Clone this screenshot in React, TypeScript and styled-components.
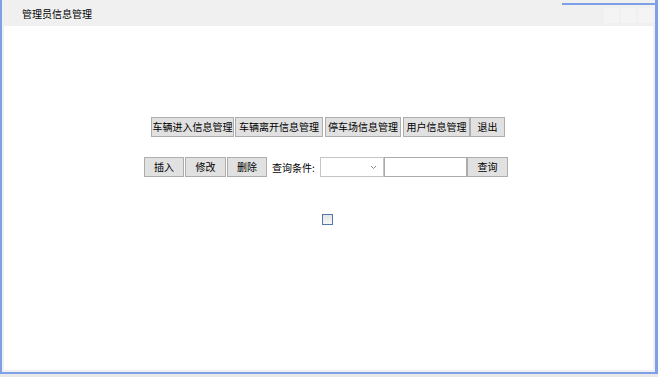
import React from 'react';
import styled, { createGlobalStyle } from 'styled-components';

const GlobalStyle = createGlobalStyle`
  html, body {
    margin: 0;
    padding: 0;
    background: #e9e9e9;
  }
  * {
    box-sizing: border-box;
  }
`;

const FONT = `"Noto Sans CJK SC", "Microsoft YaHei", sans-serif`;
const FRAME_BLUE = '#7f9fe6';

const Window = styled.div`
  position: relative;
  width: 658px;
  height: 374px;
  display: flex;
  flex-direction: column;
  background: #f0f0f0;
  border-left: 2px solid ${FRAME_BLUE};
  border-right: 3px solid ${FRAME_BLUE};
  border-bottom: 2px solid ${FRAME_BLUE};
  padding: 0 2px 2px 2px;
  font-family: ${FONT};
  font-size: 10px;
  color: #000;

  /* partial top edge of the resized frame */
  &::before {
    content: '';
    position: absolute;
    top: 3px;
    left: 560px;
    right: 0;
    height: 2px;
    background: ${FRAME_BLUE};
  }
`;

const TitleBar = styled.div`
  height: 26px;
  flex-shrink: 0;
  display: flex;
  align-items: flex-start;
  justify-content: space-between;
  padding: 7px 0 0 18px;
`;

const Title = styled.span`
  line-height: 14px;
`;

const Controls = styled.div`
  display: flex;
  gap: 2px;
  margin-top: 1px;
`;

const ControlBox = styled.span`
  width: 15px;
  height: 15px;
  background: #f4f4f4;
`;

const Client = styled.div`
  flex: 1;
  background: #ffffff;
  display: flex;
  flex-direction: column;
  padding-top: 91px;
`;

const Row = styled.div<{ $left: number; $mt?: number }>`
  display: flex;
  align-items: center;
  height: 20px;
  padding-left: ${({ $left }) => $left}px;
  margin-top: ${({ $mt }) => $mt ?? 0}px;
`;

const Btn = styled.button<{ $w: number; $gap?: number }>`
  width: ${({ $w }) => $w}px;
  height: 20px;
  margin: 0 ${({ $gap }) => $gap ?? 0}px 0 0;
  padding: 0;
  background: #e1e1e1;
  border: 1px solid #adadad;
  font-family: ${FONT};
  font-size: 10px;
  color: #000;
  line-height: 18px;
  white-space: nowrap;
`;

const Label = styled.span`
  margin: 0 4px 0 5px;
  width: 44px;
  white-space: nowrap;
`;

const SelectBox = styled.div`
  width: 64px;
  height: 20px;
  border: 1px solid #c4c4c4;
  background: #fff;
  display: flex;
  align-items: center;
  justify-content: flex-end;
  padding-right: 6px;
  color: #8a8a8a;
`;

const TextBox = styled.div`
  width: 83px;
  height: 20px;
  border: 1px solid #ababab;
  background: #fff;
`;

const CheckRow = styled.div`
  display: flex;
  justify-content: center;
  margin-top: 37px;
  padding-right: 2px;
`;

const CheckBox = styled.span`
  width: 11px;
  height: 11px;
  border: 1px solid #5677ad;
  background: linear-gradient(#e4e4e4, #f7f7f7);
`;

export default function App() {
  return (
    <>
      <GlobalStyle />
      <Window>
        <TitleBar>
          <Title>管理员信息管理</Title>
          <Controls>
            <ControlBox />
            <ControlBox />
            <ControlBox />
          </Controls>
        </TitleBar>
        <Client>
          <Row $left={147}>
            <Btn $w={83} $gap={1}>车辆进入信息管理</Btn>
            <Btn $w={88} $gap={2}>车辆离开信息管理</Btn>
            <Btn $w={76} $gap={2}>停车场信息管理</Btn>
            <Btn $w={67}>用户信息管理</Btn>
            <Btn $w={35}>退出</Btn>
          </Row>
          <Row $left={140} $mt={20}>
            <Btn $w={40} $gap={1}>插入</Btn>
            <Btn $w={41} $gap={1}>修改</Btn>
            <Btn $w={40}>删除</Btn>
            <Label>查询条件:</Label>
            <SelectBox>
              <svg width="7" height="5" viewBox="0 0 7 5">
                <path d="M1 1 L3.5 3.5 L6 1" fill="none" stroke="#8a8a8a" strokeWidth="1" />
              </svg>
            </SelectBox>
            <TextBox />
            <Btn $w={41}>查询</Btn>
          </Row>
          <CheckRow>
            <CheckBox />
          </CheckRow>
        </Client>
      </Window>
    </>
  );
}
